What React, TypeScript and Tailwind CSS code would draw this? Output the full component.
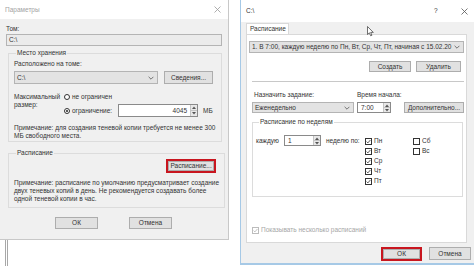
import React from 'react';

const Chevron = () => (
  <svg width="6" height="4" viewBox="0 0 6 4">
    <path d="M0.6 0.8 L3 3.2 L5.4 0.8" stroke="#666" strokeWidth="0.9" fill="none" />
  </svg>
);

const Spinner = () => (
  <div className="w-[7px] h-full flex flex-col border-l border-[#c4c4c4] bg-[#e8e8e8]">
    <div className="flex-1 flex items-center justify-center border-b border-[#c4c4c4]">
      <svg width="4" height="3" viewBox="0 0 4 3"><path d="M0 3 L2 0.5 L4 3 Z" fill="#555" /></svg>
    </div>
    <div className="flex-1 flex items-center justify-center">
      <svg width="4" height="3" viewBox="0 0 4 3"><path d="M0 0 L2 2.5 L4 0 Z" fill="#555" /></svg>
    </div>
  </div>
);

const Radio = ({ checked }: { checked?: boolean }) => (
  <div className="w-[6px] h-[6px] rounded-full border border-[#333] bg-white flex items-center justify-center shrink-0">
    {checked && <div className="w-[2px] h-[2px] rounded-full bg-[#222]" />}
  </div>
);

const Check = ({ checked, disabled }: { checked?: boolean; disabled?: boolean }) => (
  <div
    className={
      disabled
        ? 'w-[7px] h-[7px] border border-[#bcbcbc] bg-white flex items-center justify-center shrink-0'
        : 'w-[7px] h-[7px] border border-[#333] bg-white flex items-center justify-center shrink-0'
    }
  >
    {checked && (
      <svg width="5" height="5" viewBox="0 0 5 5">
        <path d="M0.6 2.6 L1.9 3.9 L4.4 1" stroke={disabled ? '#b4b4b4' : '#333'} strokeWidth="0.8" fill="none" />
      </svg>
    )}
  </div>
);

const Close = ({ color }: { color: string }) => (
  <svg width="7" height="7" viewBox="0 0 7 7">
    <path d="M0.5 0.5 L6.5 6.5 M6.5 0.5 L0.5 6.5" stroke={color} strokeWidth="0.8" />
  </svg>
);

const Cursor = () => (
  <svg width="7" height="11" viewBox="0 0 7 11">
    <path d="M0.5 0.5 L0.5 8.5 L2.4 6.8 L3.7 9.8 L4.9 9.3 L3.7 6.4 L6.3 6.4 Z" fill="white" stroke="#333" strokeWidth="0.7" />
  </svg>
);

function ParamsDialog() {
  return (
    <div className="flex flex-col w-[229px] shrink-0">
      <div className="h-[240px] flex flex-col bg-[#f0f0f0] border-r border-b border-[#c8c8c8]">
        <div className="h-[19px] shrink-0 bg-white flex items-center justify-between pl-[5px] pr-[7px]">
          <span className="text-[#a3a3a3]">Параметры</span>
          <Close color="#9a9a9a" />
        </div>
        <div className="flex flex-col pl-[6px] pr-[6px] pt-[6px]">
          <div>Том:</div>
          <div className="mt-[1px] h-[12px] border border-[#b4b4b4] bg-[#ebebeb] flex items-center pl-[2px]">C:\</div>

          <fieldset className="mt-[3px] ml-[2px] border border-[#dcdcdc] px-[5px] pb-[1px]">
            <legend className="ml-[2px] px-[1px]">Место хранения</legend>
            <div className="mt-[3px]">Расположено на томе:</div>
            <div className="mt-[3px] flex items-center">
              <div className="w-[144px] h-[13px] border border-[#b4b4b4] bg-[#e3e3e3] flex items-center justify-between pl-[2px] pr-[3px]">
                <span>C:\</span>
                <Chevron />
              </div>
              <div className="ml-[6px] w-[49px] h-[13px] border border-[#adadad] bg-[#e1e1e1] flex items-center justify-center">Сведения...</div>
            </div>
            <div className="mt-[8px] flex">
              <div className="w-[50px] pt-[1px]">
                Максимальный
                <br />
                размер:
              </div>
              <div className="flex flex-col gap-[2px]">
                <div className="h-[10px] flex items-center">
                  <Radio />
                  <span className="ml-[2px]">не ограничен</span>
                </div>
                <div className="h-[13px] flex items-center">
                  <Radio checked />
                  <span className="ml-[2px] w-[46px]">ограничение:</span>
                  <div className="w-[80px] h-[13px] border border-[#8a8a8a] bg-white flex">
                    <span className="flex-1 text-right pr-[3px] self-center">4045</span>
                    <Spinner />
                  </div>
                  <span className="ml-[5px]">МБ</span>
                </div>
              </div>
            </div>
            <div className="mt-[7px]">
              Примечание: для создания теневой копии требуется не менее 300
              <br />
              МБ свободного места.
            </div>
          </fieldset>

          <fieldset className="mt-[7px] ml-[2px] border border-[#dcdcdc] px-[5px] pb-[4px]">
            <legend className="ml-[2px] px-[1px]">Расписание</legend>
            <div className="mt-[2px] flex justify-end pr-[3px]">
              <div className="border-2 border-[#c8161f]">
                <div className="w-[46px] h-[10px] bg-[#e1e1e1] border border-[#adadad] flex items-center justify-center">Расписание...</div>
              </div>
            </div>
            <div className="mt-[6px]">
              Примечание: расписание по умолчанию предусматривает создание
              <br />
              двух теневых копий в день. Не рекомендуется создавать более
              <br />
              одной теневой копии в час.
            </div>
          </fieldset>

          <div className="mt-[9px] flex pl-[49px] gap-[31px]">
            <div className="w-[43px] h-[12px] border border-[#adadad] bg-[#e1e1e1] flex items-center justify-center">ОК</div>
            <div className="w-[43px] h-[12px] border border-[#adadad] bg-[#e1e1e1] flex items-center justify-center">Отмена</div>
          </div>
        </div>
      </div>
      <div className="flex-1 ml-[5px] w-[3px] border-x border-[#a8a8a8]" />
    </div>
  );
}

function ScheduleDialog() {
  const days = ['Пн', 'Вт', 'Ср', 'Чт', 'Пт'];
  return (
    <div className="relative ml-[11px] w-[236px] h-[265px] shrink-0 border-l border-b-2 border-[#a6c9e6] flex flex-col">
      <div className="h-[22px] shrink-0 bg-white flex items-center">
        <span className="pl-[5px] w-[193px]">C:\</span>
        <span className="w-[27px]">?</span>
        <Close color="#555" />
      </div>
      <div className="flex-1 bg-[#f0f0f0] flex flex-col pl-[5px]">
        <div className="mt-[1px] flex">
          <div className="h-[11px] w-[43px] pl-[3px] bg-white border border-b-0 border-[#d9d9d9] flex items-center">Расписание</div>
        </div>
        <div className="w-[221px] h-[209px] bg-white border border-[#d9d9d9] flex flex-col">
          <div className="mt-[6px] ml-[2px] w-[215px] h-[12px] border border-[#b4b4b4] bg-[#e3e3e3] flex items-center pl-[2px] pr-[3px]">
            <span className="flex-1 overflow-hidden">1. В 7:00, каждую неделю по Пн, Вт, Ср, Чт, Пт, начиная с 15.02.20</span>
            <span className="ml-[2px]"><Chevron /></span>
          </div>
          <div className="mt-[8px] flex justify-end pr-[5px] gap-[5px]">
            <div className="w-[42px] h-[11px] border border-[#adadad] bg-[#e1e1e1] flex items-center justify-center">Создать</div>
            <div className="w-[45px] h-[11px] border border-[#adadad] bg-[#e1e1e1] flex items-center justify-center">Удалить</div>
          </div>
          <div className="mt-[9px] ml-[5px] w-[212px] border-t border-[#c8c8c8]" />
          <div className="mt-[9px] ml-[7px] flex">
            <span className="w-[103px]">Назначить задание:</span>
            <span>Время начала:</span>
          </div>
          <div className="mt-[3px] ml-[5px] flex">
            <div className="w-[102px] h-[11px] border border-[#b4b4b4] bg-[#e3e3e3] flex items-center justify-between pl-[2px] pr-[3px]">
              <span>Еженедельно</span>
              <Chevron />
            </div>
            <div className="ml-[3px] w-[34px] h-[11px] border border-[#8a8a8a] bg-white flex">
              <span className="flex-1 pl-[3px] self-center">7:00</span>
              <Spinner />
            </div>
            <div className="ml-[13px] w-[60px] h-[11px] border border-[#adadad] bg-[#e1e1e1] flex items-center justify-center">Дополнительно...</div>
          </div>
          <fieldset className="mt-[5px] ml-[5px] w-[211px] border border-[#dcdcdc] pl-[3px] pb-[10px]">
            <legend className="ml-[3px] px-[1px]">Расписание по неделям</legend>
            <div className="mt-[9px] flex items-start">
              <div className="w-[28px] h-[11px] flex items-center">каждую</div>
              <div className="w-[37px] h-[11px] border border-[#8a8a8a] bg-white flex">
                <span className="flex-1 pl-[3px] self-center">1</span>
                <Spinner />
              </div>
              <div className="ml-[5px] w-[39px] h-[11px] flex items-center">неделю по:</div>
              <div className="w-[48px] mt-[1px] flex flex-col">
                {days.map((d) => (
                  <div key={d} className="h-[10px] flex items-center">
                    <Check checked />
                    <span className="ml-[2px]">{d}</span>
                  </div>
                ))}
              </div>
              <div className="mt-[1px] flex flex-col">
                {['Сб', 'Вс'].map((d) => (
                  <div key={d} className="h-[10px] flex items-center">
                    <Check />
                    <span className="ml-[2px]">{d}</span>
                  </div>
                ))}
              </div>
            </div>
          </fieldset>
          <div className="mt-[29px] ml-[5px] flex items-center text-[#a6a6a6]">
            <Check checked disabled />
            <span className="ml-[2px]">Показывать несколько расписаний</span>
          </div>
        </div>
        <div className="mt-[4px] ml-[135px] flex gap-[7px]">
          <div className="border-2 border-[#c8161f]">
            <div className="w-[37px] h-[10px] border border-[#adadad] bg-[#e1e1e1] flex items-center justify-center">ОК</div>
          </div>
          <div className="w-[42px] h-[13px] border border-[#adadad] bg-[#e1e1e1] flex items-center justify-center">Отмена</div>
        </div>
      </div>
      <div className="absolute left-[126px] top-[26px]">
        <Cursor />
      </div>
    </div>
  );
}

export default function App() {
  return (
    <div className="w-[474px] h-[266px] overflow-hidden bg-white flex whitespace-nowrap text-[6.5px] leading-[8px] text-[#333] font-['Liberation_Sans',Arial,sans-serif]">
      <ParamsDialog />
      <ScheduleDialog />
    </div>
  );
}
